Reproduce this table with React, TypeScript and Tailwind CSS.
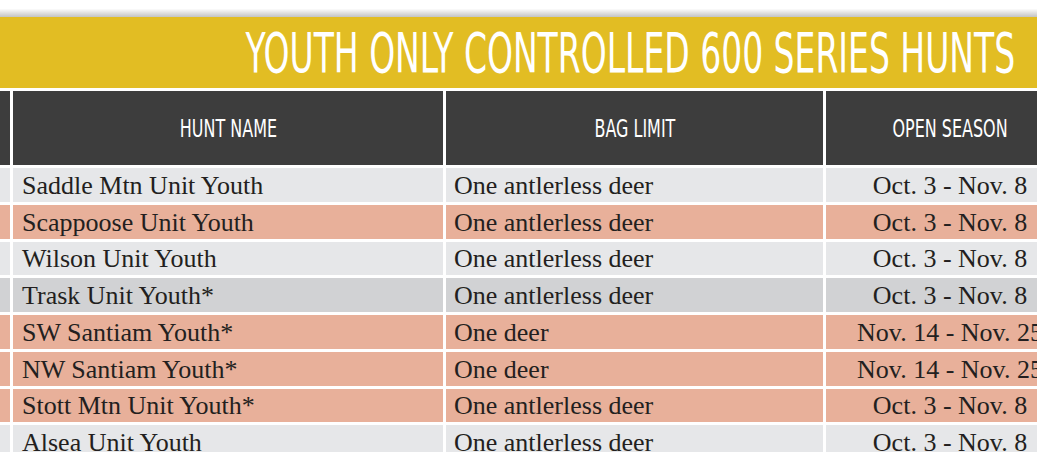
import React from 'react';

type Row = { name: string; bag: string; season: string; tone: 'light' | 'salmon' | 'dark' };

const rows: Row[] = [
  { name: 'Saddle Mtn Unit Youth', bag: 'One antlerless deer', season: 'Oct. 3 - Nov. 8', tone: 'light' },
  { name: 'Scappoose Unit Youth', bag: 'One antlerless deer', season: 'Oct. 3 - Nov. 8', tone: 'salmon' },
  { name: 'Wilson Unit Youth', bag: 'One antlerless deer', season: 'Oct. 3 - Nov. 8', tone: 'light' },
  { name: 'Trask Unit Youth*', bag: 'One antlerless deer', season: 'Oct. 3 - Nov. 8', tone: 'dark' },
  { name: 'SW Santiam Youth*', bag: 'One deer', season: 'Nov. 14 - Nov. 25', tone: 'salmon' },
  { name: 'NW Santiam Youth*', bag: 'One deer', season: 'Nov. 14 - Nov. 25', tone: 'salmon' },
  { name: 'Stott Mtn Unit Youth*', bag: 'One antlerless deer', season: 'Oct. 3 - Nov. 8', tone: 'salmon' },
  { name: 'Alsea Unit Youth', bag: 'One antlerless deer', season: 'Oct. 3 - Nov. 8', tone: 'light' },
];

const toneClass = {
  light: 'bg-[#e6e7e9]',
  salmon: 'bg-[#e8b09a]',
  dark: 'bg-[#d1d2d4]',
};

const condensed = "font-['Liberation_Sans_Narrow','DejaVu_Sans_Condensed',sans-serif]";
const serif = "font-['Liberation_Serif',serif]";

const App: React.FC = () => {
  return (
    <div className="w-[1037px] h-[452px] overflow-hidden bg-white">
      <div className="h-[17px] bg-gradient-to-b from-white from-50% to-[#c4c4c4]" />
      <div className="h-[71px] bg-[#e2bd23] flex items-center justify-end pr-[22px] overflow-hidden">
        <h1 className={`${condensed} text-[56px] leading-none text-white whitespace-nowrap scale-x-[0.655] origin-right`}>
          YOUTH ONLY CONTROLLED 600 SERIES HUNTS
        </h1>
      </div>

      <div className="mt-[3px] grid grid-cols-[10px_430px_377px_248px] gap-[3px]">
        <div className="h-[74px] bg-[#3d3d3d]" />
        {['HUNT NAME', 'BAG LIMIT', 'OPEN SEASON'].map((h) => (
          <div key={h} className="h-[74px] bg-[#3d3d3d] flex items-center justify-center">
            <span className={`${condensed} text-[25px] leading-none text-white whitespace-nowrap scale-x-[0.71]`}>{h}</span>
          </div>
        ))}

        {rows.map((r) => (
          <React.Fragment key={r.name}>
            <div className={`h-[33.75px] ${toneClass[r.tone]}`} />
            <div className={`h-[33.75px] ${toneClass[r.tone]} flex items-center pl-[9px] pt-[2px]`}>
              <span className={`${serif} text-[26px] leading-none text-[#231f20] whitespace-nowrap`}>{r.name}</span>
            </div>
            <div className={`h-[33.75px] ${toneClass[r.tone]} flex items-center pl-[8px] pt-[2px]`}>
              <span className={`${serif} text-[26px] leading-none text-[#231f20] whitespace-nowrap`}>{r.bag}</span>
            </div>
            <div className={`h-[33.75px] ${toneClass[r.tone]} flex items-center justify-center pt-[2px]`}>
              <span className={`${serif} text-[26px] leading-none text-[#231f20] whitespace-nowrap`}>{r.season}</span>
            </div>
          </React.Fragment>
        ))}
      </div>
    </div>
  );
};

export default App;
